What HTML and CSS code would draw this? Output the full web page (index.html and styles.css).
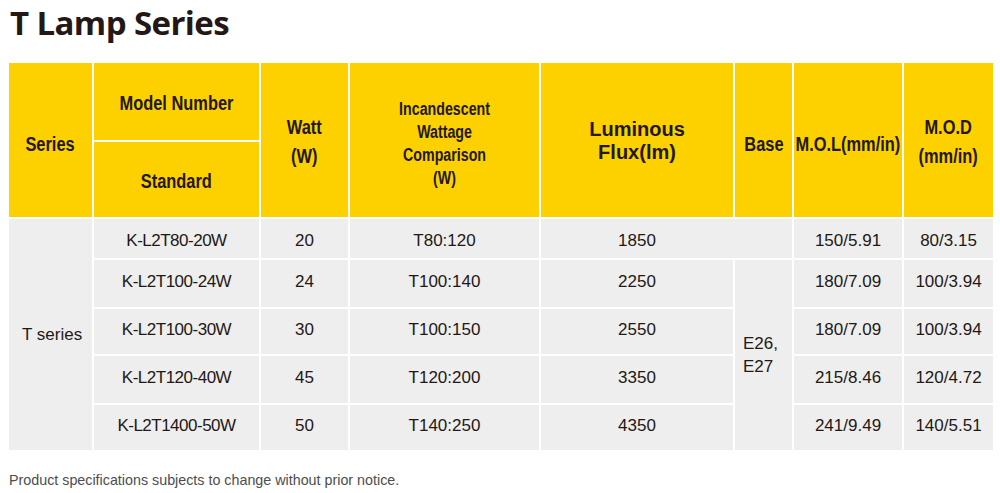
FILE: index.html
```html
<!DOCTYPE html>
<html>
<head>
<meta charset="utf-8">
<link rel="stylesheet" href="styles.css">
</head>
<body>
<h1 class="title">T Lamp Series</h1>
<table class="spec">
  <colgroup>
    <col class="c-series"><col class="c-model"><col class="c-watt"><col class="c-inc"><col class="c-lum"><col class="c-base"><col class="c-mol"><col class="c-mod">
  </colgroup>
  <thead>
    <tr class="h1row">
      <th rowspan="2" class="tall"><span class="cond">Series</span></th>
      <th><span class="cond">Model Number</span></th>
      <th rowspan="2" class="two"><span class="cond">Watt<br>(W)</span></th>
      <th rowspan="2" class="inc"><span class="cond small">Incandescent<br>Wattage<br>Comparison<br>(W)</span></th>
      <th rowspan="2" class="lum">Luminous<br>Flux(lm)</th>
      <th rowspan="2" class="tall"><span class="cond">Base</span></th>
      <th rowspan="2" class="tall"><span class="cond wide">M.O.L(mm/in)</span></th>
      <th rowspan="2" class="two"><span class="cond">M.O.D<br>(mm/in)</span></th>
    </tr>
    <tr class="h2row">
      <th><span class="cond">Standard</span></th>
    </tr>
  </thead>
  <tbody>
    <tr class="r1">
      <td rowspan="5" class="series">T series</td>
      <td class="m">K-L2T80-20W</td>
      <td>20</td>
      <td>T80:120</td>
      <td colspan="2" class="lum-span">1850</td>
      <td>150/5.91</td>
      <td>80/3.15</td>
    </tr>
    <tr class="r2">
      <td class="m">K-L2T100-24W</td>
      <td>24</td>
      <td>T100:140</td>
      <td>2250</td>
      <td rowspan="4" class="base">E26,<br>E27</td>
      <td>180/7.09</td>
      <td>100/3.94</td>
    </tr>
    <tr class="r3">
      <td class="m">K-L2T100-30W</td>
      <td>30</td>
      <td>T100:150</td>
      <td>2550</td>
      <td>180/7.09</td>
      <td>100/3.94</td>
    </tr>
    <tr class="r2">
      <td class="m">K-L2T120-40W</td>
      <td>45</td>
      <td>T120:200</td>
      <td>3350</td>
      <td>215/8.46</td>
      <td>120/4.72</td>
    </tr>
    <tr class="r3">
      <td class="m">K-L2T1400-50W</td>
      <td>50</td>
      <td>T140:250</td>
      <td>4350</td>
      <td>241/9.49</td>
      <td>140/5.51</td>
    </tr>
  </tbody>
</table>
<p class="note">Product specifications subjects to change without prior notice.</p>
</body>
</html>
```

FILE: styles.css
```css
html, body {
  margin: 0;
  padding: 0;
  background: #ffffff;
}
body {
  font-family: "Liberation Sans", Arial, sans-serif;
  color: #231815;
}
.title {
  margin: 0 0 16px 10px;
  font-family: "Open Sans", "Noto Sans", sans-serif;
  font-weight: 700;
  font-size: 33px;
  line-height: 45px;
  color: #231815;
  letter-spacing: -0.6px;
}
.spec {
  margin-left: 7px;
  border-collapse: separate;
  border-spacing: 2px;
  table-layout: fixed;
  width: 988px;
}
.c-series { width: 83px; }
.c-model { width: 165px; }
.c-watt { width: 87px; }
.c-inc { width: 189px; }
.c-lum { width: 192px; }
.c-base { width: 57px; }
.c-mol { width: 108px; }
.c-mod { width: 89px; }

.spec th {
  background: #fdd100;
  color: #231815;
  font-weight: 700;
  font-size: 20px;
  line-height: 29px;
  padding: 4px 0 0 0;
  text-align: center;
  vertical-align: middle;
}
.spec th.tall {
  padding-top: 8px;
}
.spec th.two {
  padding-top: 3px;
}
.h1row { height: 77px; }
.h2row { height: 75px; }
.cond {
  display: inline-block;
  transform: scaleX(0.82);
  white-space: nowrap;
}
.cond.wide {
  margin: 0 -14px;
}
.cond.small {
  font-size: 18px;
  line-height: 23px;
  transform: scaleX(0.79);
  padding-top: 6px;
}
.spec th.lum {
  line-height: 23px;
  padding-top: 2px;
}
.spec td {
  background: #eeeeee;
  font-size: 17px;
  line-height: 20px;
  padding: 0;
  text-align: center;
  vertical-align: middle;
  color: #231815;
}
.spec td.m {
  letter-spacing: -0.5px;
}
.r1 { height: 39px; }
.r1 td { padding-top: 5px; }
.r2 { height: 47px; }
.r3 { height: 45px; }
.r2 td, .r3 td { padding-bottom: 4px; }
.spec td.series {
  text-align: left;
  padding: 0 0 0 13px;
}
.spec td.lum-span {
  padding-right: 59px;
}
.spec td.base {
  text-align: left;
  padding: 0 0 0 8px;
  line-height: 23px;
}
.note {
  margin: 19px 0 0 9px;
  font-size: 14.3px;
  line-height: 18px;
  color: #4d4d4d;
}
```
